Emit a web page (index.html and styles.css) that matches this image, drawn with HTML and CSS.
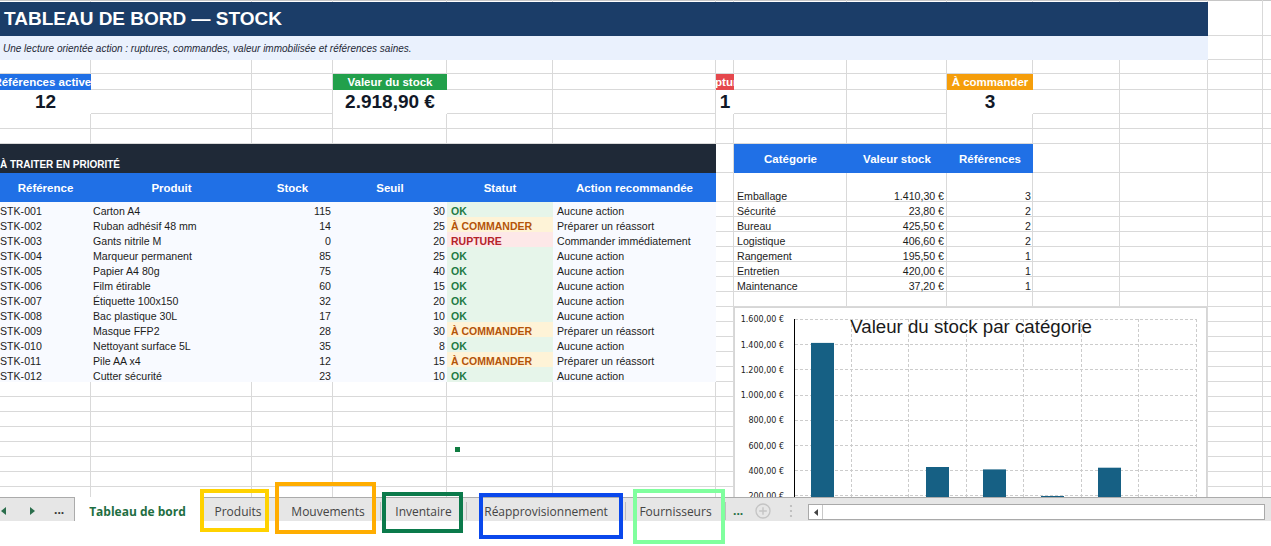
FILE: index.html
```html
<!DOCTYPE html>
<html lang="fr">
<head>
<meta charset="utf-8">
<title>Tableau de bord — Stock</title>
<link rel="stylesheet" href="styles.css">
</head>
<body>
<div class="sheet">
  <div class="title">TABLEAU DE BORD — STOCK</div>
  <div class="subtitle">Une lecture orientée action : ruptures, commandes, valeur immobilisée et références saines.</div>

  <div class="kpi-label col-a k-blue"><span>Références actives</span></div>
  <div class="kpi-label col-d k-green"><span>Valeur du stock</span></div>
  <div class="kpi-label col-g k-red"><span>Ruptures</span></div>
  <div class="kpi-label col-j k-orange"><span>À commander</span></div>
  <div class="kpi-value col-a"><span>12</span></div>
  <div class="kpi-value col-d"><span>2.918,90 €</span></div>
  <div class="kpi-value col-g"><span>1</span></div>
  <div class="kpi-value col-j"><span>3</span></div>

  <div class="band">À TRAITER EN PRIORITÉ</div>

  <div class="ltable">
    <div class="th">Référence</div><div class="th">Produit</div><div class="th">Stock</div><div class="th">Seuil</div><div class="th">Statut</div><div class="th">Action recommandée</div>

    <div class="td ref">STK-001</div><div class="td">Carton A4</div><div class="td num">115</div><div class="td num">30</div><div class="td st ok">OK</div><div class="td act">Aucune action</div>
    <div class="td ref">STK-002</div><div class="td">Ruban adhésif 48 mm</div><div class="td num">14</div><div class="td num">25</div><div class="td st cmd">À COMMANDER</div><div class="td act">Préparer un réassort</div>
    <div class="td ref">STK-003</div><div class="td">Gants nitrile M</div><div class="td num">0</div><div class="td num">20</div><div class="td st rup">RUPTURE</div><div class="td act">Commander immédiatement</div>
    <div class="td ref">STK-004</div><div class="td">Marqueur permanent</div><div class="td num">85</div><div class="td num">25</div><div class="td st ok">OK</div><div class="td act">Aucune action</div>
    <div class="td ref">STK-005</div><div class="td">Papier A4 80g</div><div class="td num">75</div><div class="td num">40</div><div class="td st ok">OK</div><div class="td act">Aucune action</div>
    <div class="td ref">STK-006</div><div class="td">Film étirable</div><div class="td num">60</div><div class="td num">15</div><div class="td st ok">OK</div><div class="td act">Aucune action</div>
    <div class="td ref">STK-007</div><div class="td">Étiquette 100x150</div><div class="td num">32</div><div class="td num">20</div><div class="td st ok">OK</div><div class="td act">Aucune action</div>
    <div class="td ref">STK-008</div><div class="td">Bac plastique 30L</div><div class="td num">17</div><div class="td num">10</div><div class="td st ok">OK</div><div class="td act">Aucune action</div>
    <div class="td ref">STK-009</div><div class="td">Masque FFP2</div><div class="td num">28</div><div class="td num">30</div><div class="td st cmd">À COMMANDER</div><div class="td act">Préparer un réassort</div>
    <div class="td ref">STK-010</div><div class="td">Nettoyant surface 5L</div><div class="td num">35</div><div class="td num">8</div><div class="td st ok">OK</div><div class="td act">Aucune action</div>
    <div class="td ref">STK-011</div><div class="td">Pile AA x4</div><div class="td num">12</div><div class="td num">15</div><div class="td st cmd">À COMMANDER</div><div class="td act">Préparer un réassort</div>
    <div class="td ref">STK-012</div><div class="td">Cutter sécurité</div><div class="td num">23</div><div class="td num">10</div><div class="td st ok">OK</div><div class="td act">Aucune action</div>
  </div>

  <div class="rtable">
    <div class="th">Catégorie</div><div class="th">Valeur stock</div><div class="th">Références</div>
    <div class="td">Emballage</div><div class="td num">1.410,30 €</div><div class="td num">3</div>
    <div class="td">Sécurité</div><div class="td num">23,80 €</div><div class="td num">2</div>
    <div class="td">Bureau</div><div class="td num">425,50 €</div><div class="td num">2</div>
    <div class="td">Logistique</div><div class="td num">406,60 €</div><div class="td num">2</div>
    <div class="td">Rangement</div><div class="td num">195,50 €</div><div class="td num">1</div>
    <div class="td">Entretien</div><div class="td num">420,00 €</div><div class="td num">1</div>
    <div class="td">Maintenance</div><div class="td num">37,20 €</div><div class="td num">1</div>
  </div>

  <div class="chart">
    <svg width="474" height="195" viewBox="0 0 474 195">
      <rect x="0.5" y="0.5" width="472" height="210" fill="#fff" stroke="#d6d6d6"/>
      <g stroke="#cccccc" stroke-width="1" stroke-dasharray="3 2" fill="none">
        <line x1="61" y1="12.5" x2="462" y2="12.5"/>
        <line x1="61" y1="37.5" x2="462" y2="37.5"/>
        <line x1="61" y1="62.5" x2="462" y2="62.5"/>
        <line x1="61" y1="88.5" x2="462" y2="88.5"/>
        <line x1="61" y1="113.5" x2="462" y2="113.5"/>
        <line x1="61" y1="138.5" x2="462" y2="138.5"/>
        <line x1="61" y1="163.5" x2="462" y2="163.5"/>
        <line x1="61" y1="188.5" x2="462" y2="188.5"/>
        <line x1="117.5" y1="12" x2="117.5" y2="214"/>
        <line x1="174.5" y1="12" x2="174.5" y2="214"/>
        <line x1="232.5" y1="12" x2="232.5" y2="214"/>
        <line x1="289.5" y1="12" x2="289.5" y2="214"/>
        <line x1="347.5" y1="12" x2="347.5" y2="214"/>
        <line x1="404.5" y1="12" x2="404.5" y2="214"/>
        <line x1="462.5" y1="12" x2="462.5" y2="214"/>
      </g>
      <g fill="#166084">
        <rect x="77" y="35.9" width="23" height="177.7"/>
        <rect x="135" y="210.6" width="23" height="3"/>
        <rect x="192" y="160" width="23" height="53.6"/>
        <rect x="249" y="162.4" width="23" height="51.2"/>
        <rect x="307" y="189" width="23" height="24.6"/>
        <rect x="364" y="160.7" width="23" height="52.9"/>
        <rect x="422" y="208.9" width="23" height="4.7"/>
      </g>
      <line x1="60.5" y1="12" x2="60.5" y2="214" stroke="#000" stroke-width="1"/>
      <g class="ylab" text-anchor="end">
        <text x="50" y="15">1.600,00 €</text>
        <text x="50" y="40.5">1.400,00 €</text>
        <text x="50" y="65.5">1.200,00 €</text>
        <text x="50" y="91">1.000,00 €</text>
        <text x="50" y="116">800,00 €</text>
        <text x="50" y="141.5">600,00 €</text>
        <text x="50" y="166.5">400,00 €</text>
        <text x="50" y="191.5">200,00 €</text>
      </g>
      <text class="ctitle" x="237" y="26" text-anchor="middle">Valeur du stock par catégorie</text>
    </svg>
  </div>

  <div class="handle"></div>
</div>

<div class="tabbar">
  <div class="nav">
    <svg class="tri tri-l" width="5" height="8" viewBox="0 0 5 8"><path d="M5 0 L0 4 L5 8 Z"/></svg>
    <svg class="tri tri-r" width="5" height="8" viewBox="0 0 5 8"><path d="M0 0 L5 4 L0 8 Z"/></svg>
    <span class="navdots">...</span>
  </div>
  <div class="tab active">Tableau de bord</div>
  <div class="tab w-prod">Produits</div><div class="sep"></div>
  <div class="tab w-mouv">Mouvements</div><div class="sep"></div>
  <div class="tab w-inv">Inventaire</div><div class="sep"></div>
  <div class="tab w-reap">Réapprovisionnement</div><div class="sep"></div>
  <div class="tab w-four">Fournisseurs</div><div class="sep"></div>
  <span class="moredots">...</span>
  <svg class="addsheet" width="16" height="16" viewBox="0 0 16 16"><circle cx="8" cy="8" r="7" fill="none" stroke="#c4c4c4" stroke-width="1.3"/><path d="M8 4.2 V11.8 M4.2 8 H11.8" stroke="#c4c4c4" stroke-width="1.4"/></svg>
  <svg class="vdots" width="4" height="14" viewBox="0 0 4 14"><circle cx="2" cy="2" r="1.1" fill="#b8b8b8"/><circle cx="2" cy="7" r="1.1" fill="#b8b8b8"/><circle cx="2" cy="12" r="1.1" fill="#b8b8b8"/></svg>
  <div class="hscroll">
    <div class="hs-btn"><svg width="4" height="7" viewBox="0 0 4 7"><path d="M4 0 L0 3.5 L4 7 Z" fill="#444"/></svg></div>
  </div>
</div>

<div class="mark m-yellow"></div>
<div class="mark m-orange"></div>
<div class="mark m-dgreen"></div>
<div class="mark m-blue"></div>
<div class="mark m-lgreen"></div>
</body>
</html>
```

FILE: styles.css
```css
* { box-sizing: border-box; margin: 0; padding: 0; }
html, body { width: 1271px; height: 546px; overflow: hidden; background: #fff; }
body {
  font-family: "Liberation Sans", Arial, sans-serif;
  color: #1c1c1c;
  position: relative;
}

/* ---------- sheet grid ---------- */
.sheet {
  --g: #d9d9d9;
  position: relative;
  height: 497px;
  overflow: hidden;
  display: grid;
  grid-template-columns: 91px 161px 81px 114px 106px 163px 18px 113px 100px 86px 87px 88px 55px 8px;
  grid-template-rows: 2px 34px 24px 14px 16px 24px 15px 15px 29px 29px repeat(20, 15px);
  background:
    linear-gradient(var(--g), var(--g)) 90px 0 / 1px 100% no-repeat,
    linear-gradient(var(--g), var(--g)) 251px 0 / 1px 100% no-repeat,
    linear-gradient(var(--g), var(--g)) 332px 0 / 1px 100% no-repeat,
    linear-gradient(var(--g), var(--g)) 446px 0 / 1px 100% no-repeat,
    linear-gradient(var(--g), var(--g)) 552px 0 / 1px 100% no-repeat,
    linear-gradient(var(--g), var(--g)) 715px 0 / 1px 100% no-repeat,
    linear-gradient(var(--g), var(--g)) 733px 0 / 1px 100% no-repeat,
    linear-gradient(var(--g), var(--g)) 846px 0 / 1px 100% no-repeat,
    linear-gradient(var(--g), var(--g)) 946px 0 / 1px 100% no-repeat,
    linear-gradient(var(--g), var(--g)) 1032px 0 / 1px 100% no-repeat,
    linear-gradient(var(--g), var(--g)) 1119px 0 / 1px 100% no-repeat,
    linear-gradient(var(--g), var(--g)) 1207px 0 / 1px 100% no-repeat,
    linear-gradient(var(--g), var(--g)) 1262px 0 / 1px 100% no-repeat,
    linear-gradient(#c6c6c6, #c6c6c6) 0 0 / 100% 1px no-repeat,
    linear-gradient(var(--g), var(--g)) 0 35px / 100% 1px no-repeat,
    linear-gradient(var(--g), var(--g)) 0 59px / 100% 1px no-repeat,
    linear-gradient(var(--g), var(--g)) 0 73px / 100% 1px no-repeat,
    linear-gradient(var(--g), var(--g)) 0 89px / 100% 1px no-repeat,
    linear-gradient(var(--g), var(--g)) 0 113px / 100% 1px no-repeat,
    linear-gradient(var(--g), var(--g)) 0 128px / 100% 1px no-repeat,
    linear-gradient(var(--g), var(--g)) 0 143px / 100% 1px no-repeat,
    linear-gradient(var(--g), var(--g)) 0 172px / 100% 1px no-repeat,
    repeating-linear-gradient(to bottom, var(--g) 0 1px, transparent 1px 15px) 0 201px / 100% 300px no-repeat,
    #fff;
}

.title {
  grid-column: 1 / 13;
  grid-row: 2;
  background: #1b3d68;
  color: #fff;
  font-weight: bold;
  font-size: 19px;
  display: flex;
  align-items: center;
  padding-left: 4px;
  white-space: nowrap;
}

.subtitle {
  grid-column: 1 / 13;
  grid-row: 3;
  background: #eaf1fd;
  color: #1f2937;
  font-style: italic;
  font-size: 10px;
  display: flex;
  align-items: center;
  padding-left: 3px;
  white-space: nowrap;
}

/* KPI */
.col-a { grid-column: 1; }
.col-d { grid-column: 4; }
.col-g { grid-column: 7; }
.col-j { grid-column: 10; }

.kpi-label {
  grid-row: 5;
  display: flex;
  align-items: center;
  justify-content: center;
  overflow: hidden;
  white-space: nowrap;
  color: #fff;
  font-weight: bold;
  font-size: 11.5px;
}
.kpi-label span, .kpi-value span { flex-shrink: 0; }
.k-blue { background: #2070e6; }
.k-green { background: #22a04b; }
.k-red { background: #e5484d; }
.k-orange { background: #f59e0b; }

.kpi-value {
  grid-row: 6;
  background: #fff;
  display: flex;
  align-items: center;
  justify-content: center;
  overflow: hidden;
  white-space: nowrap;
  font-weight: bold;
  font-size: 19px;
  color: #111827;
}

/* section band */
.band {
  grid-column: 1 / 7;
  grid-row: 9;
  background: #1f2937;
  color: #fff;
  font-weight: bold;
  font-size: 10px;
  line-height: 12px;
  display: flex;
  align-items: flex-end;
  padding-bottom: 2px;
  white-space: nowrap;
}

/* left table */
.ltable {
  grid-column: 1 / 7;
  grid-row: 10 / 23;
  display: grid;
  grid-template-columns: 91px 161px 81px 114px 106px 163px;
  grid-template-rows: 29px repeat(12, 15px);
  background: #f8faff;
}

.th {
  background: #2070e6;
  color: #fff;
  font-weight: bold;
  font-size: 11.5px;
  display: flex;
  align-items: center;
  justify-content: center;
  white-space: nowrap;
  overflow: hidden;
}

.td {
  font-size: 10.6px;
  line-height: 12px;
  display: flex;
  align-items: flex-end;
  white-space: nowrap;
  overflow: hidden;
  padding: 0 2px;
  color: #1c1c1c;
}
.td.ref { padding-left: 0; }
.td.num { justify-content: flex-end; }
.td.st { font-weight: bold; padding-left: 4px; font-size: 10.5px; }
.td.act { padding-left: 4px; }
.st.ok { background: #e6f5ea; color: #217a43; }
.st.cmd { background: #fef3d7; color: #b45309; }
.st.rup { background: #fde8e8; color: #b4232a; }

/* right table */
.rtable {
  grid-column: 8 / 11;
  grid-row: 9 / 17;
  display: grid;
  grid-template-columns: 113px 100px 86px;
  grid-template-rows: 29px 29px repeat(6, 15px);
}
.rtable .td { padding: 0 3px; }
.rtable .td.num:last-child, .rtable .td.num:nth-child(3n) { padding-right: 2px; }

/* chart */
.chart {
  grid-column: 8 / 13;
  grid-row: 18 / 31;
  overflow: hidden;
}
.chart svg { display: block; }
.ylab text {
  font-family: "DejaVu Sans", sans-serif;
  font-size: 8px;
  fill: #222;
}
.ctitle {
  font-family: "Liberation Sans", Arial, sans-serif;
  font-size: 18.7px;
  fill: #1a1a1a;
}

.handle {
  position: absolute;
  left: 454px;
  top: 446px;
  width: 7px;
  height: 7px;
  background: #107c41;
  border: 1px solid #fff;
}

/* ---------- tab bar ---------- */
.tabbar {
  height: 24px;
  display: flex;
  align-items: stretch;
  background: #e6e6e6;
  border-top: 1px solid #ababab;
  font-family: "Open Sans", "Noto Sans", sans-serif;
  font-size: 12px;
  color: #444;
  white-space: nowrap;
}

.nav {
  width: 74px;
  display: flex;
  align-items: center;
  padding-top: 3px;
}
.tri { display: block; fill: #2b6e4c; }
.tri-l { margin-left: 1px; }
.tri-r { margin-left: 24px; }
.navdots {
  margin-left: 19px;
  font-weight: 700;
  color: #333;
  line-height: 12px;
  margin-top: -2px;
}

.tab {
  display: flex;
  align-items: center;
  justify-content: center;
  padding-top: 3px;
}
.tab.active {
  width: 127px;
  margin-top: -1px;
  background: #fff;
  color: #1e6e42;
  font-weight: 700;
  border-left: 1px solid #ababab;
  border-right: 1px solid #ababab;
  padding-top: 4px;
}
.w-prod { width: 74px; }
.w-mouv { width: 104px; }
.w-inv { width: 85px; }
.w-reap { width: 158px; }
.w-four { width: 99px; }

.sep {
  width: 1px;
  background: #bdbdbd;
  margin: 4px 0 1px;
}

.moredots {
  margin-left: 7px;
  color: #1e6e42;
  font-weight: 700;
  align-self: center;
  padding-top: 1px;
}
.addsheet { align-self: center; margin-left: 12px; margin-top: 3px; }
.vdots { align-self: center; margin-left: 18px; margin-top: 3px; }

.hscroll {
  margin-left: 15px;
  width: 457px;
  height: 16px;
  align-self: flex-end;
  margin-bottom: 1px;
  background: #fff;
  border: 1px solid #a9a9a9;
  display: flex;
}
.hs-btn {
  width: 14px;
  border-right: 1px solid #c8c8c8;
  display: flex;
  align-items: center;
  justify-content: center;
}

/* ---------- annotation boxes over the tabs ---------- */
.mark {
  position: absolute;
  border: 4px solid;
}
.m-yellow { left: 200px; top: 489px; width: 69px; height: 43px; border-color: #ffd200; }
.m-orange { left: 275px; top: 482px; width: 101px; height: 52px; border-color: #ffad00; }
.m-dgreen { left: 382px; top: 492px; width: 81px; height: 41px; border-color: #0b7a4b; }
.m-blue { left: 479px; top: 493px; width: 144px; height: 46px; border-color: #0a48ec; }
.m-lgreen { left: 633px; top: 489px; width: 92px; height: 55px; border-color: #80ff9e; }
```
